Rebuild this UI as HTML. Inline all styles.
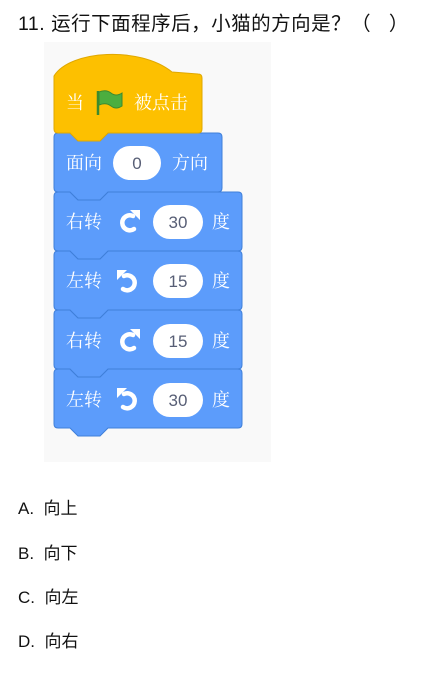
<!DOCTYPE html>
<html><head><meta charset="utf-8"><style>
body{margin:0;width:437px;height:673px;background:#fff;position:relative;font-family:"Liberation Sans","Noto Sans CJK SC",sans-serif;overflow:hidden}
.t{position:absolute;left:18px;top:7px;font-size:19.5px;color:#111;white-space:nowrap;letter-spacing:0.5px}
.o{position:absolute;left:18px;font-size:17px;color:#111}
svg{position:absolute;left:0;top:0}
.cj{font-family:"Noto Serif CJK SC","Noto Sans CJK SC",serif}
</style></head><body>
<div class="t">11. 运行下面程序后，小猫的方向是？（&nbsp;&nbsp;&nbsp;）</div>
<svg width="437" height="673" viewBox="0 0 437 673">
<rect x="44" y="42" width="227" height="420" fill="#f9f9f9"/>
<g fill="#5c9cfb" stroke="#3f7fd9" stroke-width="1">
<path d="M58,369 L70,369 L78,377 L100,377 L108,369 L238,369 Q242,369 242,373 L242,424 Q242,428 238,428 L108,428 L100,436 L78,436 L70,428 L58,428 Q54,428 54,424 L54,373 Q54,369 58,369Z"/>
<path d="M58,310 L70,310 L78,318 L100,318 L108,310 L238,310 Q242,310 242,314 L242,365 Q242,369 238,369 L108,369 L100,377 L78,377 L70,369 L58,369 Q54,369 54,365 L54,314 Q54,310 58,310Z"/>
<path d="M58,251 L70,251 L78,259 L100,259 L108,251 L238,251 Q242,251 242,255 L242,306 Q242,310 238,310 L108,310 L100,318 L78,318 L70,310 L58,310 Q54,310 54,306 L54,255 Q54,251 58,251Z"/>
<path d="M58,192 L70,192 L78,200 L100,200 L108,192 L238,192 Q242,192 242,196 L242,247 Q242,251 238,251 L108,251 L100,259 L78,259 L70,251 L58,251 Q54,251 54,247 L54,196 Q54,192 58,192Z"/>
<path d="M58,133 L70,133 L78,141 L100,141 L108,133 L218,133 Q222,133 222,137 L222,188 Q222,192 218,192 L108,192 L100,200 L78,200 L70,192 L58,192 Q54,192 54,188 L54,137 Q54,133 58,133Z"/>
</g>
<path d="M54,76 C70,50 140,46 172,72 L198,74 Q202,74 202,78 L202,129 Q202,133 198,133 L108,133 L100,141 L78,141 L70,133 L58,133 Q54,133 54,129 Z" fill="#fdc000" stroke="#e0a800"/>
<g fill="#fff" font-size="18" class="cj">
<text x="66" y="109">当</text><text x="134" y="109">被点击</text>
<text x="66" y="169">面向</text><text x="172" y="169">方向</text>
<text x="66" y="228">右转</text><text x="212" y="228">度</text>
<text x="66" y="287">左转</text><text x="212" y="287">度</text>
<text x="66" y="347">右转</text><text x="212" y="347">度</text>
<text x="66" y="406">左转</text><text x="212" y="406">度</text>
</g>
<path d="M98,91 V115" stroke="#3c8a2e" stroke-width="2.5"/>
<path d="M99,92 Q106,89 111,93 Q116,97 122,93 L122,106 Q116,110 111,106 Q106,102 99,105Z" fill="#4cae3f" stroke="#3c8a2e"/>
<g fill="#fff">
<rect x="113" y="146" width="48" height="34" rx="17"/>
<rect x="153" y="205" width="50" height="34" rx="17"/>
<rect x="153" y="264" width="50" height="34" rx="17"/>
<rect x="153" y="324" width="50" height="34" rx="17"/>
<rect x="153" y="383" width="50" height="34" rx="17"/>
</g>
<g fill="#575e75" font-family="Liberation Sans, sans-serif" font-size="17" text-anchor="middle">
<text x="137" y="169">0</text><text x="178" y="228">30</text><text x="178" y="287">15</text><text x="178" y="347">15</text><text x="178" y="406">30</text>
</g>
<g fill="none" stroke="#fff" stroke-width="4.5" stroke-linecap="round">
<path d="M133,216 A7.5,7.5 0 1 0 134,229"/>
<path d="M124,276 A7.5,7.5 0 1 1 123,289"/>
<path d="M133,335 A7.5,7.5 0 1 0 134,348"/>
<path d="M124,394 A7.5,7.5 0 1 1 123,407"/>
</g>
<g fill="#fff">
<path d="M130,210 L140,210 L140,220 Z"/>
<path d="M127,270 L117,270 L117,280 Z"/>
<path d="M130,329 L140,329 L140,339 Z"/>
<path d="M127,388 L117,388 L117,398 Z"/>
</g>
</svg>
<div class="o" style="top:494px">A.&nbsp; 向上</div>
<div class="o" style="top:539px">B.&nbsp; 向下</div>
<div class="o" style="top:583px">C.&nbsp; 向左</div>
<div class="o" style="top:627px">D.&nbsp; 向右</div>
</body></html>
